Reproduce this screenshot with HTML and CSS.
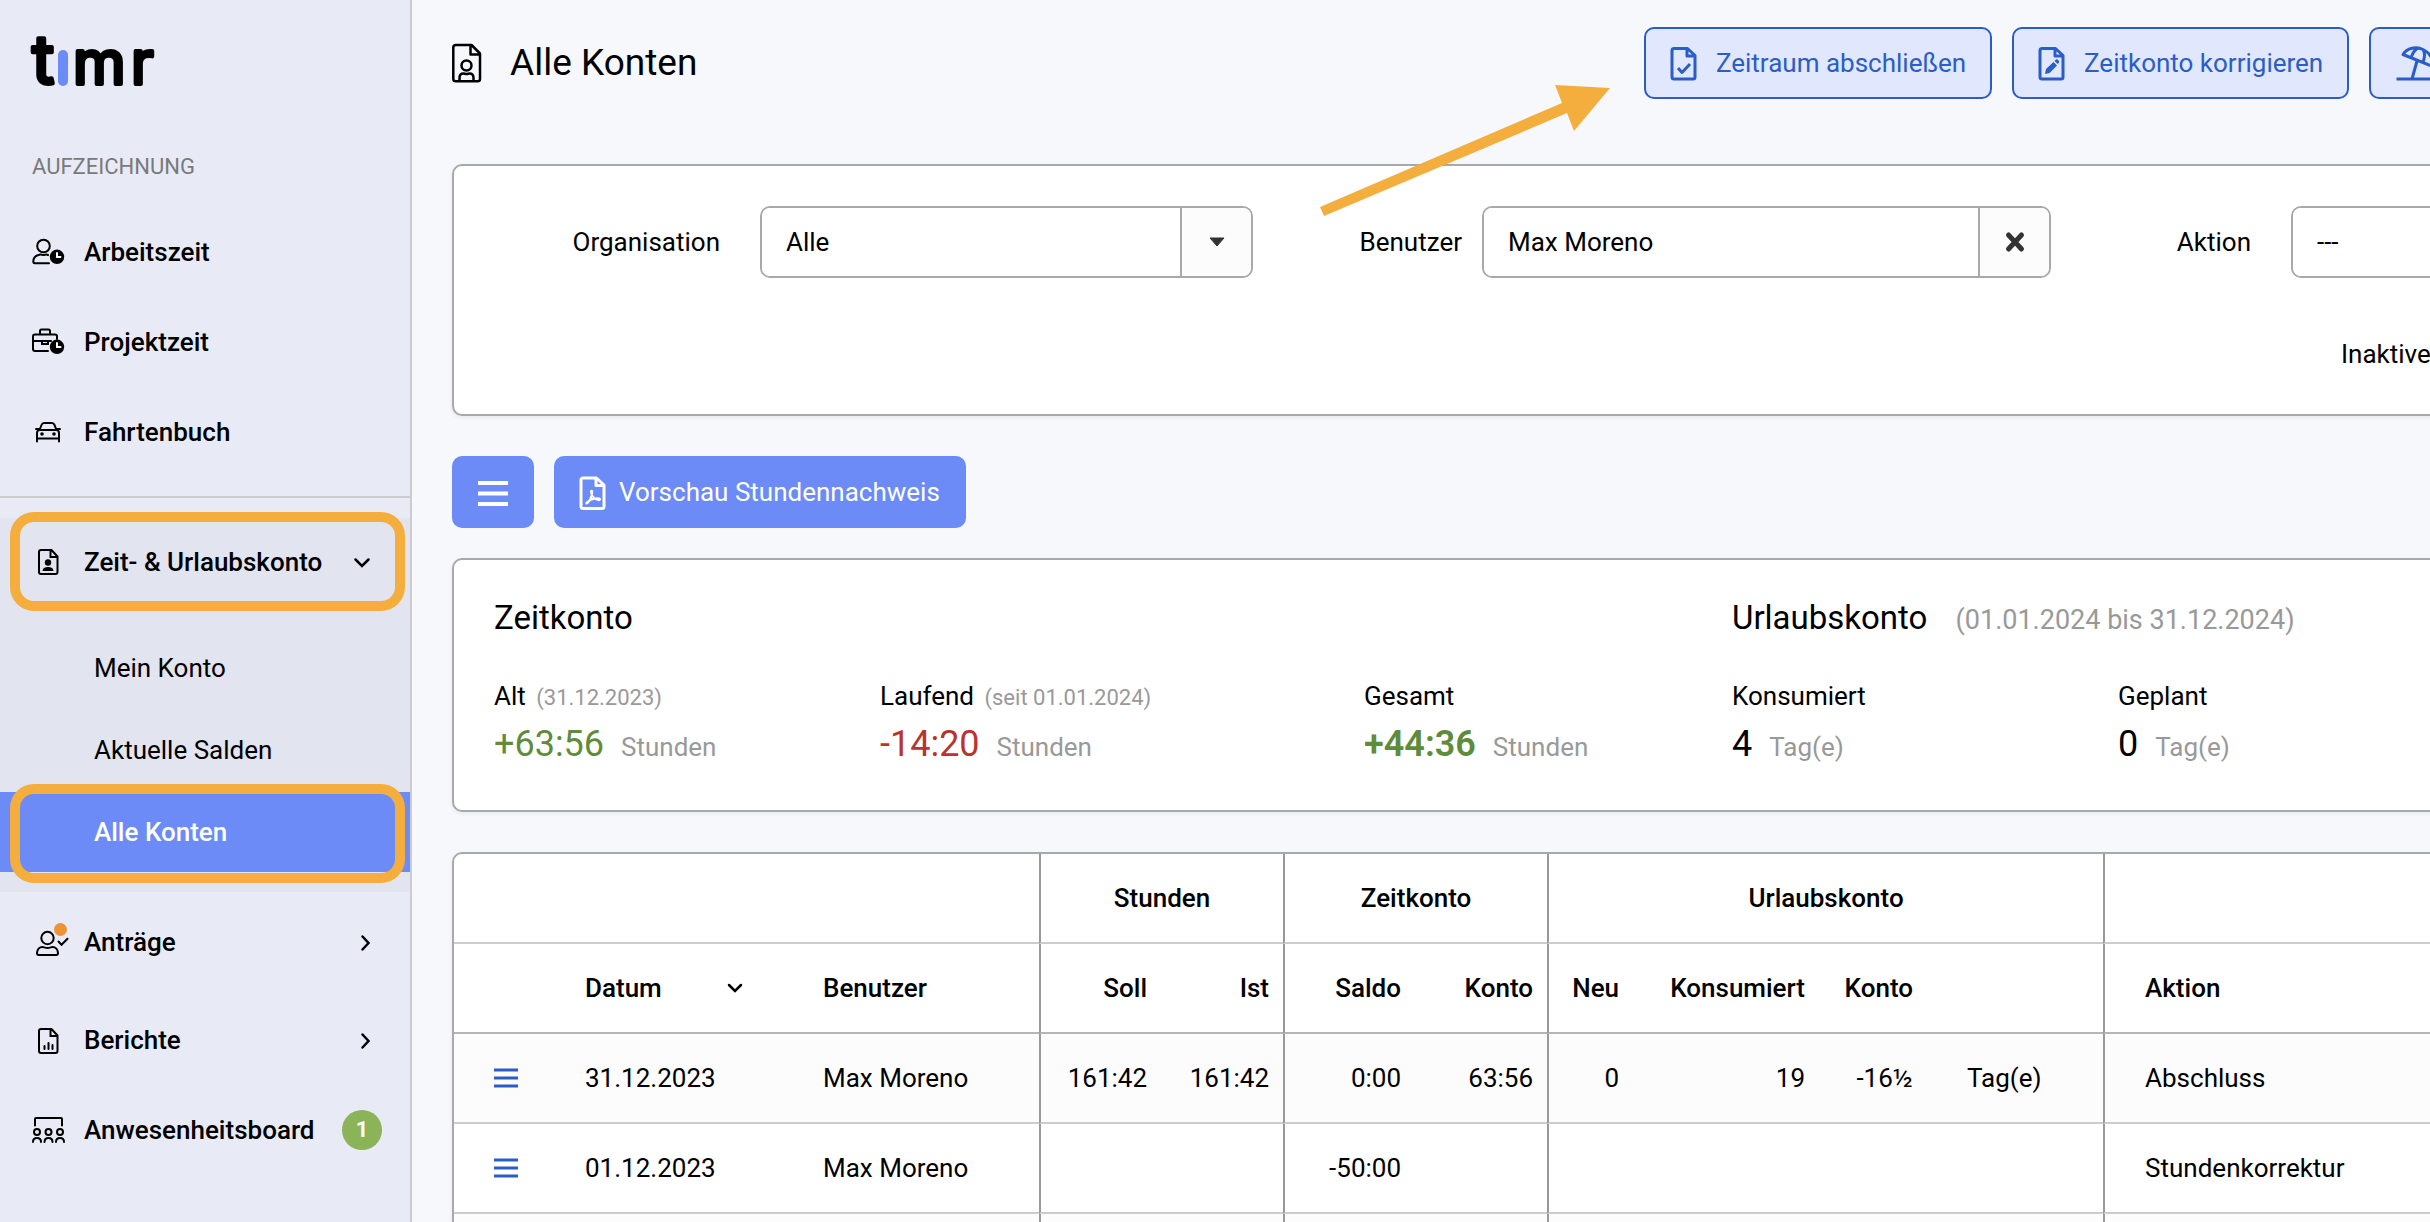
FILE: index.html
```html
<!DOCTYPE html>
<html lang="de">
<head>
    <meta charset="UTF-8">
    <meta name="viewport" content="width=device-width, initial-scale=1.0">
    <title>timr - Alle Konten</title>
    <link rel="stylesheet" href="styles.css">
</head>
<body>
    <aside class="sidebar">
        <a class="logo" href="#" aria-label="timr">
            <svg width="126" height="54" viewBox="0 0 126 54">
                <g class="logo-text">
                    <text class="tall" x="0" y="51">t</text>
                    <text x="41" y="51">m</text>
                    <text x="99" y="51">r</text>
                </g>
                <rect x="26" y="17" width="10" height="36" rx="5" fill="#6c8bf7"/>
            </svg>
        </a>
        <h2 class="nav-title">Aufzeichnung</h2>
        <nav>
            <ul class="nav-list nav-main">
                <li>
                    <a class="nav-item" href="#">
                        <svg class="nav-icon" viewBox="0 0 36 36">
                            <circle cx="12.500" cy="12" r="6.300"/>
                            <path d="M17 21c-2-1-3 0-4.500 0s-3-1-5 0c-3 .8-5.200 3-5.200 6.500 0 1.200.7 1.700 1.500 1.700H18"/>
                            <circle class="fill" cx="26" cy="22.800" r="7.200"/>
                            <path class="light" d="M26 19v4h3.500"/>
                        </svg>
                        <span>Arbeitszeit</span>
                    </a>
                </li>
                <li>
                    <a class="nav-item" href="#">
                        <svg class="nav-icon" viewBox="0 0 36 36">
                            <path d="M26 15v-2.500c0-1-.8-2-2-2H4c-1 0-2 .8-2 2V25c0 1 .8 2 2 2h13M9 10V7c0-.9.600-1.500 1.500-1.500h7c.9 0 1.500.6 1.500 1.500v3M2 17h18M11 17v3h6v-3"/>
                            <circle class="fill" cx="26" cy="22.800" r="7.200"/>
                            <path class="light" d="M26 19v4h3.500"/>
                        </svg>
                        <span>Projektzeit</span>
                    </a>
                </li>
                <li>
                    <a class="nav-item" href="#">
                        <svg class="nav-icon" viewBox="0 0 36 36">
                            <path d="M6 27.500V19c0-1.600 1-2.800 2.500-3h17c1.500.2 2.500 1.400 2.500 3v8.500M6 24.500h22M8.500 16l2-5c.5-1.200 1.300-1.900 2.500-1.900h8c1.200 0 2 .7 2.500 1.900l2 5M5 15h3.500M25.500 15H29"/>
                            <circle class="fill" cx="11" cy="20" r="1.800"/>
                            <circle class="fill" cx="23" cy="20" r="1.800"/>
                        </svg>
                        <span>Fahrtenbuch</span>
                    </a>
                </li>
            </ul>
            <div class="nav-group">
                <a class="nav-item highlight" href="#" aria-expanded="true">
                    <svg class="nav-icon" viewBox="0 0 36 36">
                        <path d="M10 6h10.500l6 6.500V28c0 1.200-.8 2-2 2H10c-1.200 0-2-.8-2-2V8c0-1.200.8-2 2-2zM19.500 6v7h7"/>
                        <circle class="fill" cx="17" cy="18.500" r="3.200"/>
                        <path class="fill" d="M11.500 27c.3-3 2-4 5.500-4s5.200 1 5.500 4z"/>
                    </svg>
                    <span>Zeit- &amp; Urlaubskonto</span>
                    <svg class="chevron" width="16" height="16" viewBox="0 0 16 16"><path d="M1.500 5.500L8 12l6.500-6.500"/></svg>
                </a>
                <ul class="nav-list nav-sub">
                    <li><a class="sub-item" href="#">Mein Konto</a></li>
                    <li><a class="sub-item" href="#">Aktuelle Salden</a></li>
                    <li><a class="sub-item active highlight" href="#">Alle Konten</a></li>
                </ul>
            </div>
            <ul class="nav-list nav-more">
                <li class="has-children">
                    <a class="nav-item" href="#">
                        <svg class="nav-icon" viewBox="0 0 36 36">
                            <circle cx="16.500" cy="14" r="6.200"/>
                            <path d="M11.500 23c-3 0-5.500 2.500-5.500 6 0 1.500.6 2 1.700 2h17.600c1.100 0 1.700-.5 1.700-2 0-3.500-2.500-6-5.500-6-1.500 0-2.500 1-5 1s-3.500-1-5-1zM27.500 17.500l3 3.200 6-6"/>
                            <circle class="dot" cx="29.500" cy="5.500" r="6.500"/>
                        </svg>
                        <span>Anträge</span>
                        <svg class="chevron" width="16" height="16" viewBox="0 0 16 16"><path d="M8.500 2.500L14.500 9l-6 6.500"/></svg>
                    </a>
                </li>
                <li>
                    <a class="nav-item" href="#">
                        <svg class="nav-icon" viewBox="0 0 36 36">
                            <path d="M10 7h10.500l6 6.500V29c0 1.200-.8 2-2 2H10c-1.200 0-2-.8-2-2V9c0-1.200.8-2 2-2zM19.500 7v7h7M13.500 27v-3M17.500 27v-6M21.500 27v-4"/>
                        </svg>
                        <span>Berichte</span>
                        <svg class="chevron" width="16" height="16" viewBox="0 0 16 16"><path d="M8.500 2.500L14.500 9l-6 6.500"/></svg>
                    </a>
                </li>
                <li>
                    <a class="nav-item" href="#">
                        <svg class="nav-icon" viewBox="0 0 36 36">
                            <path d="M4 13.500V7c0-.6.400-1 1-1h25c.6 0 1 .4 1 1v6.500"/>
                            <circle cx="6" cy="20" r="3"/>
                            <circle cx="17.500" cy="20" r="3"/>
                            <circle cx="29" cy="20" r="3"/>
                            <path d="M2 30c0-2.500 1.500-4 4-4s4 1.500 4 4M13.500 30c0-2.500 1.500-4 4-4s4 1.500 4 4M25 30c0-2.500 1.500-4 4-4s4 1.500 4 4"/>
                        </svg>
                        <span>Anwesenheitsboard</span>
                        <span class="badge">1</span>
                    </a>
                </li>
            </ul>
        </nav>
    </aside>

    <main class="content">
        <header class="page-header">
            <svg class="page-icon" width="30" height="40" viewBox="0 0 30 40">
                <path d="M4 2h15.500L28 10.500V36c0 1.400-.9 2.300-2.300 2.300H4c-1.400 0-2.700-.9-2.700-2.300V4.500C1.300 3 2.500 2 4 2zM18.500 2v9.500H28"/>
                <circle cx="14.500" cy="22.500" r="5"/>
                <path d="M7.500 38v-3c0-3 1.700-4.500 4-4.500 1.200 0 1.700.6 3 .6s1.800-.6 3-.6c2.300 0 4 1.500 4 4.500v3"/>
            </svg>
            <h1>Alle Konten</h1>
            <div class="actions">
                <button type="button" class="btn btn-outline">
                    <svg width="28" height="36" viewBox="0 0 28 36">
                        <path d="M4 3.500h13.500l7.500 7V32c0 1.200-.8 2-2 2H4c-1.200 0-2-.8-2-2V5.500c0-1.200.8-2 2-2zM17 3.500V11h8M8 23l4 4.500 8-8.500"/>
                    </svg>
                    <span>Zeitraum abschließen</span>
                </button>
                <button type="button" class="btn btn-outline">
                    <svg width="28" height="36" viewBox="0 0 28 36">
                        <path d="M4 3.500h13.500l7.500 7V32c0 1.200-.8 2-2 2H4c-1.200 0-2-.8-2-2V5.500c0-1.200.8-2 2-2zM17 3.500V11h8"/>
                        <path class="solid" d="M7 29l1-5 7.500-7 3.500 3.500-7.500 7.500zM16.500 16l1.500-1.500c1-.8 3.800 1.500 3 3L19.800 19z"/>
                    </svg>
                    <span>Zeitkonto korrigieren</span>
                </button>
                <button type="button" class="btn btn-outline">
                    <svg width="40" height="36" viewBox="0 0 40 36">
                        <path d="M1.500 34H38M17 34l5-18M8 9.500C12 3 21 1 28 4.500s11 10 9.500 17L8 9.500zM16 12.500c2-5.500 5-9.500 9-9.500M28 17.500c2-5.500 2-10 0-13"/>
                    </svg>
                    <span>Urlaubskonto korrigieren</span>
                </button>
            </div>
        </header>

        <form class="panel filter">
            <label for="organisation">Organisation</label>
            <div class="field">
                <select id="organisation"><option>Alle</option></select>
                <span class="addon"><svg width="16" height="10" viewBox="0 0 16 10"><path d="M1 1h14L8 9z" fill="#333" stroke="#333" stroke-linejoin="round"/></svg></span>
            </div>
            <label for="benutzer">Benutzer</label>
            <div class="field">
                <input type="text" id="benutzer" value="Max Moreno">
                <button type="button" class="addon" aria-label="Zurücksetzen"><svg width="20" height="20" viewBox="0 0 20 20"><path d="M3.500 3l13 14M16.500 3l-13 14" stroke="#333" stroke-width="5" stroke-linecap="round"/></svg></button>
            </div>
            <label for="aktion">Aktion</label>
            <div class="field">
                <select id="aktion"><option>---</option></select>
            </div>
            <label class="check" for="inaktive">Inaktive Benutzer <input type="checkbox" id="inaktive"></label>
        </form>

        <div class="toolbar">
            <button type="button" class="btn btn-primary btn-menu" aria-label="Menü">
                <svg width="30" height="26" viewBox="0 0 30 26"><path d="M0 4h30M0 14.500h30M0 25h30" stroke-width="4"/></svg>
            </button>
            <button type="button" class="btn btn-primary btn-pdf">
                <svg width="28" height="36" viewBox="0 0 28 36">
                    <path d="M4 4h13.500l7.500 7V32.500c0 1.200-.8 2-2 2H4c-1.200 0-2-.8-2-2V6c0-1.200.8-2 2-2zM17 4v7.500h8"/>
                    <path class="thin" d="M7.500 29.500c2-.3 5.500-6.500 5.800-11.500 0-1.800-1.500-1.800-1.300 0 .3 4 4.500 8.200 7.800 8.200 1.800 0 1.500-2-.3-2-3.500 0-9 1.800-11.500 4-.8.700-.8 1.300-.5 1.300z"/>
                </svg>
                <span>Vorschau Stundennachweis</span>
            </button>
        </div>

        <section class="panel summary">
            <div class="account time-account">
                <h2>Zeitkonto</h2>
                <dl>
                    <div>
                        <dt>Alt <small>(31.12.2023)</small></dt>
                        <dd class="positive">+63:56 <span class="unit">Stunden</span></dd>
                    </div>
                    <div class="wide">
                        <dt>Laufend <small>(seit 01.01.2024)</small></dt>
                        <dd class="negative">-14:20 <span class="unit">Stunden</span></dd>
                    </div>
                    <div>
                        <dt>Gesamt</dt>
                        <dd class="positive total">+44:36 <span class="unit">Stunden</span></dd>
                    </div>
                </dl>
            </div>
            <div class="account">
                <h2>Urlaubskonto <span class="period">(01.01.2024 bis 31.12.2024)</span></h2>
                <dl>
                    <div>
                        <dt>Konsumiert</dt>
                        <dd>4 <span class="unit">Tag(e)</span></dd>
                    </div>
                    <div>
                        <dt>Geplant</dt>
                        <dd>0 <span class="unit">Tag(e)</span></dd>
                    </div>
                </dl>
            </div>
        </section>

        <div class="panel">
            <table class="accounts">
                <colgroup>
                    <col class="c-menu"><col class="c-date"><col class="c-user">
                    <col class="c-hours"><col class="c-hours">
                    <col class="c-balance"><col class="c-balance">
                    <col class="c-new"><col class="c-used"><col class="c-rest"><col class="c-unit">
                    <col>
                </colgroup>
                <thead>
                    <tr>
                        <th colspan="3"></th>
                        <th colspan="2" class="group">Stunden</th>
                        <th colspan="2" class="group">Zeitkonto</th>
                        <th colspan="4" class="group">Urlaubskonto</th>
                        <th class="group"></th>
                    </tr>
                    <tr>
                        <th></th>
                        <th class="sorted"><div>Datum <svg class="chevron" width="16" height="10" viewBox="0 0 16 10"><path d="M2 2l6 6 6-6"/></svg></div></th>
                        <th>Benutzer</th>
                        <th class="num first">Soll</th>
                        <th class="num">Ist</th>
                        <th class="num first">Saldo</th>
                        <th class="num">Konto</th>
                        <th class="num first">Neu</th>
                        <th class="num">Konsumiert</th>
                        <th class="num">Konto</th>
                        <th></th>
                        <th class="first">Aktion</th>
                    </tr>
                </thead>
                <tbody>
                    <tr>
                        <td><button type="button" class="row-menu" aria-label="Menü"><svg width="24" height="20" viewBox="0 0 24 20"><path d="M0 2h24M0 10h24M0 18h24"/></svg></button></td>
                        <td>31.12.2023</td>
                        <td>Max Moreno</td>
                        <td class="num first">161:42</td>
                        <td class="num">161:42</td>
                        <td class="num first">0:00</td>
                        <td class="num">63:56</td>
                        <td class="num first">0</td>
                        <td class="num">19</td>
                        <td class="num">-16½</td>
                        <td>Tag(e)</td>
                        <td class="first">Abschluss</td>
                    </tr>
                    <tr>
                        <td><button type="button" class="row-menu" aria-label="Menü"><svg width="24" height="20" viewBox="0 0 24 20"><path d="M0 2h24M0 10h24M0 18h24"/></svg></button></td>
                        <td>01.12.2023</td>
                        <td>Max Moreno</td>
                        <td class="num first"></td>
                        <td class="num"></td>
                        <td class="num first">-50:00</td>
                        <td class="num"></td>
                        <td class="num first"></td>
                        <td class="num"></td>
                        <td class="num"></td>
                        <td></td>
                        <td class="first">Stundenkorrektur</td>
                    </tr>
                    <tr>
                        <td></td>
                        <td></td>
                        <td></td>
                        <td class="first"></td>
                        <td></td>
                        <td class="first"></td>
                        <td></td>
                        <td class="first"></td>
                        <td></td>
                        <td></td>
                        <td></td>
                        <td class="first"></td>
                    </tr>
                </tbody>
            </table>
        </div>
    </main>

    <svg class="arrow" width="292" height="134" viewBox="0 0 292 134" aria-hidden="true">
        <path d="M1 123L243 19l-7-18 55 3-36 43-7-18L5 132z"/>
    </svg>
</body>
</html>
```

FILE: styles.css
```css
* {
    box-sizing: border-box;
}

body {
    margin: 0;
    display: flex;
    position: relative;
    height: 100vh;
    overflow: hidden;
    font-family: Roboto, "Liberation Sans", sans-serif;
    font-size: 26px;
    line-height: 32px;
    color: #000;
    background-color: #f7f8fb;
}

h1, h2, dl, dd, ul {
    margin: 0;
    padding: 0;
    font-weight: 400;
}

a {
    color: inherit;
    text-decoration: none;
}

button, input, select {
    font: inherit;
    color: inherit;
}

svg {
    flex: none;
    fill: none;
    overflow: visible;
}

/* Sidebar */
.sidebar {
    flex: none;
    width: 412px;
    border-right: 2px solid #cbcccd;
    background-color: #e8ebf5;
}

.logo {
    display: block;
    height: 151px;
    padding: 33px 32px 0;
}

.logo-text {
    font-family: Inter, sans-serif;
    font-size: 60px;
    fill: #000;
    stroke: #000;
    stroke-width: 4px;
    stroke-linejoin: round;
}

.logo-text .tall {
    font-size: 68px;
}

.nav-title {
    padding: 0 32px;
    margin-bottom: 25px;
    font-size: 22px;
    text-transform: uppercase;
    color: #7a7a7a;
}

.nav-list {
    list-style: none;
}

.nav-main {
    padding-bottom: 20px;
    border-bottom: 2px solid #cbcccd;
}

.nav-item {
    position: relative;
    display: flex;
    align-items: center;
    height: 88px;
    padding: 0 28px 0 31px;
    font-weight: 500;
}

.nav-list li + li {
    margin-top: 2px;
}

.nav-icon {
    width: 36px;
    height: 36px;
    margin-right: 17px;
    stroke: #000;
    stroke-width: 2;
    stroke-linecap: round;
}

.nav-icon .fill {
    fill: #000;
    stroke: none;
}

.nav-icon .light {
    stroke: #fff;
    stroke-width: 2;
}

.nav-icon .dot {
    fill: #ee9236;
    stroke: none;
}

.chevron {
    margin-left: auto;
    stroke: #000;
    stroke-width: 2.5;
    stroke-linecap: round;
}

.nav-item .chevron {
    margin-right: 12px;
}

.nav-group {
    margin-top: 20px;
    padding-bottom: 20px;
    background-color: #e2e4ef;
}

.nav-sub {
    padding-top: 22px;
}

.sub-item {
    position: relative;
    display: block;
    padding: 24px 94px;
}

.sub-item.active {
    font-weight: 500;
    color: #fff;
    background-color: #6c8bf7;
}

.highlight::after {
    content: "";
    position: absolute;
    top: -6px;
    bottom: -5px;
    left: 10px;
    right: 5px;
    border: 10px solid #f4ae3d;
    border-radius: 24px;
}

.sub-item.highlight::after {
    top: -8px;
    bottom: -11px;
}

.nav-more {
    padding-top: 6px;
}

.nav-more .has-children {
    margin-bottom: 10px;
}

.badge {
    width: 40px;
    height: 40px;
    margin-left: auto;
    border-radius: 50%;
    background-color: #8bb357;
    color: #fff;
    font-size: 22px;
    font-weight: 700;
    line-height: 40px;
    text-align: center;
}

/* Content */
.content {
    flex: 1 0 2391px;
    min-width: 0;
    padding: 0 40px;
}

.page-header {
    display: flex;
    align-items: center;
    height: 126px;
    margin-bottom: 38px;
}

.page-icon {
    margin-right: 28px;
    stroke: #000;
    stroke-width: 2.5;
    stroke-linejoin: round;
}

h1 {
    font-size: 37px;
    line-height: 48px;
}

.actions {
    display: flex;
    gap: 20px;
    margin-left: auto;
}

.btn {
    display: flex;
    align-items: center;
    gap: 18px;
    height: 72px;
    padding: 0 24px;
    border: none;
    border-radius: 10px;
    white-space: nowrap;
    cursor: pointer;
}

.btn svg {
    stroke: currentColor;
    stroke-width: 3;
    stroke-linejoin: round;
}

.btn .solid {
    fill: currentColor;
    stroke: none;
}

.btn .thin {
    stroke-width: 2;
}

.btn-outline {
    border: 2px solid #2a5dc7;
    background-color: #e1e7fc;
    color: #2a5dc7;
}

.btn-primary {
    background-color: #6c8bf7;
    color: #fff;
}

.btn-menu {
    padding: 0 26px;
}

.btn-pdf {
    gap: 12px;
    padding: 0 26px 0 25px;
}

.panel {
    margin-bottom: 40px;
    border: 2px solid #a9a9a9;
    border-radius: 10px;
    background-color: #fff;
    box-shadow: 0 2px 4px rgba(0, 0, 0, 0.06);
    overflow: hidden;
}

.filter {
    display: grid;
    grid-template-columns: 266px 493px 249px 569px 220px 1fr;
    align-items: center;
    row-gap: 40px;
    padding: 40px 40px 20px 0;
}

.filter label {
    text-align: right;
}

.filter .field {
    display: flex;
    height: 72px;
    border: 2px solid #a9a9a9;
    border-radius: 10px;
    overflow: hidden;
}

.filter .field:nth-of-type(odd) {
    margin-left: 40px;
    margin-right: -40px;
}

.filter .field:nth-of-type(even) {
    margin-left: 20px;
    margin-right: -20px;
}

.field input, .field select {
    flex: 1;
    min-width: 0;
    padding: 0 24px;
    border: none;
    background-color: #fff;
    appearance: none;
}

.addon {
    display: flex;
    align-items: center;
    justify-content: center;
    width: 71px;
    padding: 0;
    border: none;
    border-left: 2px solid #a9a9a9;
    background-color: #fcfcfc;
}

.filter .check {
    grid-column: 6;
    padding: 20px 0 24px;
    margin-left: 90px;
    text-align: left;
}

.toolbar {
    display: flex;
    gap: 20px;
    margin-bottom: 30px;
}

.summary {
    display: flex;
    padding: 40px 40px 46px;
}

.account {
    flex: none;
}

.time-account {
    width: 1238px;
}

.account h2 {
    height: 36px;
    margin-bottom: 44px;
    font-size: 33px;
    line-height: 36px;
}

.account dl {
    display: flex;
}

.account dl > div {
    flex: none;
    width: 386px;
}

.account dl > .wide {
    width: 484px;
}

.account dd {
    margin-top: 12px;
    font-size: 36px;
    line-height: 40px;
}

.account small, .period, .unit {
    font-weight: 400;
    line-height: 1;
    color: #999;
}

.account small {
    margin-left: 4px;
    font-size: 22px;
}

.period {
    margin-left: 20px;
    font-size: 27px;
}

.unit {
    margin-left: 8px;
    font-size: 26px;
}

.positive {
    color: #5f8c3b;
}

.negative {
    color: #b9342c;
}

.account .total {
    font-weight: 600;
}

/* Table */
.accounts {
    width: 100%;
    table-layout: fixed;
    border-collapse: separate;
    border-spacing: 0;
}

.c-menu { width: 91px; }
.c-date { width: 238px; }
.c-user { width: 256px; }
.c-hours { width: 122px; }
.c-balance { width: 132px; }
.c-new { width: 86px; }
.c-used { width: 186px; }
.c-rest { width: 108px; }
.c-unit { width: 176px; }

.accounts th, .accounts td {
    height: 90px;
    padding: 0 0 0 40px;
    border-bottom: 2px solid #ccc;
    text-align: left;
    white-space: nowrap;
}

.accounts th {
    font-weight: 500;
}

.accounts .group {
    padding: 0;
    border-left: 2px solid #999;
    text-align: center;
}

.accounts .first {
    border-left: 2px solid #999;
}

.accounts .num {
    padding: 0 14px 0 0;
    text-align: right;
}

.accounts thead tr:last-child th {
    border-bottom-color: #b5b5b5;
}

.accounts tbody tr:nth-child(odd) {
    background-color: #fcfcfc;
}

.sorted div {
    display: flex;
    align-items: center;
    padding-right: 40px;
}

.row-menu {
    display: block;
    padding: 0;
    border: none;
    background: none;
    color: #2a5dc7;
    cursor: pointer;
}

.row-menu svg {
    display: block;
    stroke: currentColor;
    stroke-width: 3;
}

/* Hint arrow over the page */
.arrow {
    position: absolute;
    top: 84px;
    left: 1319px;
    fill: #f4ae3d;
}
```
